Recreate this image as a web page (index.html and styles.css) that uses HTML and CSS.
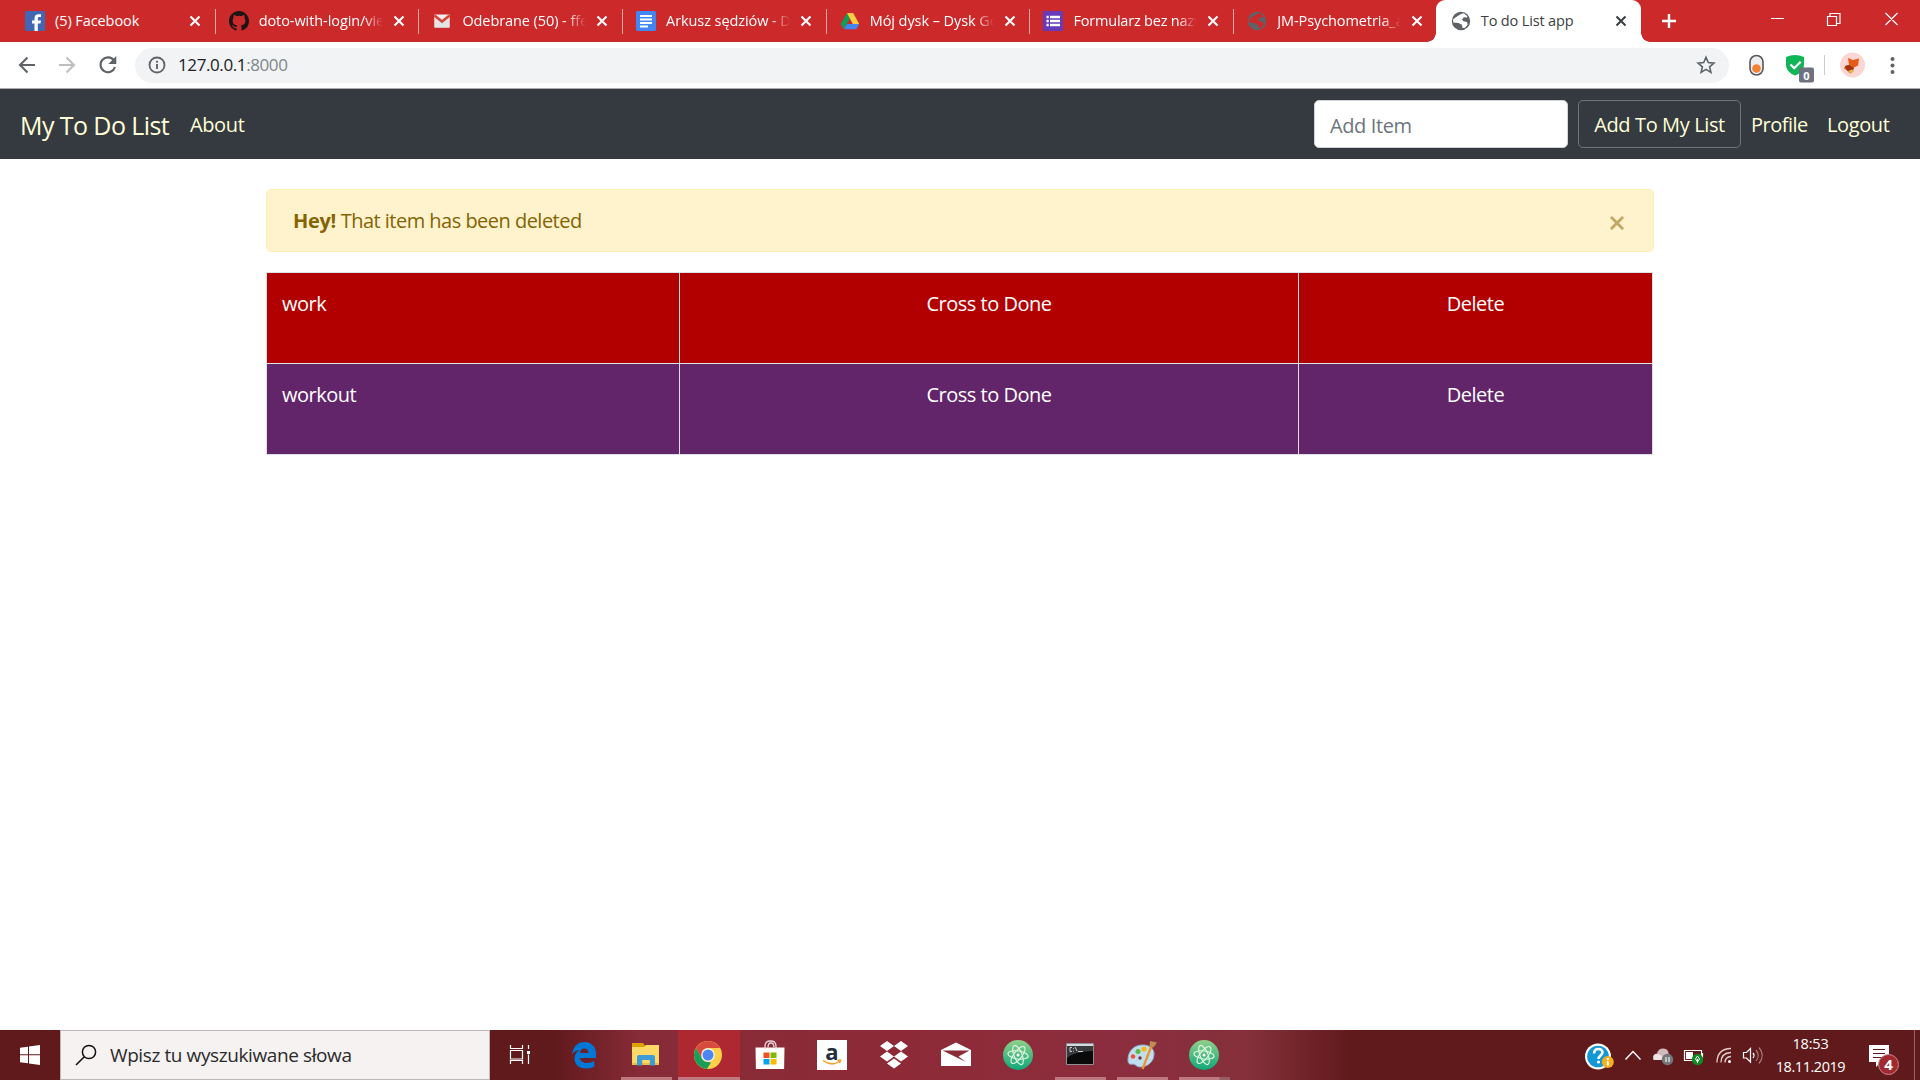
FILE: index.html
```html
<!DOCTYPE html>
<html lang="pl">
<head>
<meta charset="utf-8">
<title>To do List app</title>
<link rel="stylesheet" href="styles.css">
</head>
<body>
<svg class="defs" width="0" height="0">
  <defs>
    <symbol id="x" viewBox="0 0 12 12"><path d="M1.5 1.5l9 9m0-9l-9 9" stroke="currentColor" stroke-width="2.1" fill="none"/></symbol>
    <symbol id="globe" viewBox="0 0 20 20"><circle cx="10" cy="10" r="9.2" fill="#5f6368"/><path d="M9.5 3.2l3.2-.9 3.8 3-.7 1.3-3-.3-1.8 2.2 1.4 1.7 3.6.9.7 2.4-2.5 3.3-2.6.2-.7-3.2-3.4-1.8-5.2-.6-.2-3.2 3.1-2.3z" fill="var(--land)"/></symbol>
    <linearGradient id="ag" x2="0" y2="1"><stop stop-color="#8fd08a"/><stop offset="1" stop-color="#10a878"/></linearGradient>
    <symbol id="atom" viewBox="0 0 30 30"><circle cx="15" cy="15" r="15" fill="url(#ag)"/><g fill="none" stroke="#e4f6e4" stroke-width="1.1"><ellipse cx="15" cy="15" rx="10.2" ry="4" transform="rotate(8 15 15)"/><ellipse cx="15" cy="15" rx="10.2" ry="4" transform="rotate(68 15 15)"/><ellipse cx="15" cy="15" rx="10.2" ry="4" transform="rotate(128 15 15)"/></g><circle cx="15" cy="15" r="1.5" fill="#fff"/></symbol>
  </defs>
</svg>
<div class="screen">
  <header class="tabs">
    <div class="tab"><svg class="fav" viewBox="0 0 20 20"><rect width="20" height="20" rx="1" fill="#4267b2"/><path d="M9.5 20v-7.500H7V9.500h2.500V7.200C9.500 4.500 11 3.200 13.500 3.200l2.500.1V6h-1.600c-1.200 0-1.600.6-1.600 1.600v1.900H16l-.5 3h-2.700V20z" fill="#fff"/></svg><span class="title">(5) Facebook</span><svg class="x"><use href="#x"/></svg></div>
    <div class="tab"><svg class="fav" viewBox="0 0 16 16"><path fill="#1b1516" d="M8 0C3.580 0 0 3.580 0 8c0 3.540 2.290 6.530 5.470 7.590.4.070.55-.17.55-.38 0-.19-.01-.82-.01-1.490-2.010.37-2.530-.49-2.690-.94-.09-.23-.48-.94-.82-1.130-.28-.15-.68-.52-.01-.53.63-.01 1.080.58 1.230.82.72 1.210 1.870.87 2.330.66.070-.52.28-.87.51-1.070-1.780-.2-3.640-.89-3.640-3.950 0-.87.31-1.590.82-2.150-.08-.2-.36-1.020.08-2.120 0 0 .67-.21 2.200.82a7.600 7.600 0 0 1 4 0c1.530-1.040 2.200-.82 2.200-.82.44 1.100.16 1.920.08 2.120.51.56.82 1.270.82 2.150 0 3.070-1.870 3.750-3.650 3.950.29.25.54.73.54 1.480 0 1.070-.01 1.930-.01 2.200 0 .21.15.46.55.38A8.010 8.010 0 0 0 16 8c0-4.420-3.580-8-8-8z"/></svg><span class="title fade">doto-with-login/vie</span><svg class="x"><use href="#x"/></svg></div>
    <div class="tab"><svg class="fav" viewBox="0 0 20 20"><path d="M2.500 3.500h15v13h-15z" fill="#eee"/><path d="M2.500 16.500V5l7.500 6 7.500-6v11.500" fill="#e4e4e4"/><path d="M2.500 4.500L10 10.500l7.500-6" fill="none" stroke="#d5433b" stroke-width="2.600"/></svg><span class="title fade">Odebrane (50) - ffe</span><svg class="x"><use href="#x"/></svg></div>
    <div class="tab"><svg class="fav" viewBox="0 0 20 20"><rect width="20" height="20" rx="1.500" fill="#4285f4"/><path d="M4 5h12M4 8.500h12M4 12h12M4 15.500h8" stroke="#fff" stroke-width="2"/></svg><span class="title fade">Arkusz sędziów - D</span><svg class="x"><use href="#x"/></svg></div>
    <div class="tab"><svg class="fav" viewBox="0 0 20 20"><path d="M7 2L.700 13l3.200 5.200L10 7.300z" fill="#0f9d58"/><path d="M7 2h6.200l6 11H12.800z" fill="#ffcd40"/><path d="M3.900 18.200L7 13h12.200l-3 5.200z" fill="#4285f4"/></svg><span class="title fade">Mój dysk – Dysk Go</span><svg class="x"><use href="#x"/></svg></div>
    <div class="tab"><svg class="fav" viewBox="0 0 20 20"><rect width="20" height="20" rx="1" fill="#673ab7"/><path d="M7 6h10M7 10h10M7 14h10M3.500 6h2.200M3.500 10h2.200M3.500 14h2.200" stroke="#fff" stroke-width="2.300"/></svg><span class="title fade narrow">Formularz bez nazw</span><svg class="x"><use href="#x"/></svg></div>
    <div class="tab last"><svg class="fav"><use href="#globe"/></svg><span class="title fade">JM-Psychometria_a</span><svg class="x"><use href="#x"/></svg></div>
    <div class="tab active"><svg class="fav"><use href="#globe"/></svg><span class="title">To do List app</span><svg class="x"><use href="#x"/></svg></div>
    <svg class="plus" viewBox="0 0 16 16"><path d="M8 1v14M1 8h14" stroke="#fff" stroke-width="2.400"/></svg>
    <svg class="winbtns" viewBox="0 0 130 16"><path d="M0 7.500h13M56.500 5.500h9v9h-9zM59 5V2.500h10v10h-3M114.500 2l12 12m0-12l-12 12" fill="none" stroke="#fff" stroke-width="1.200"/></svg>
  </header>
  <div class="toolbar">
    <svg class="nav" viewBox="0 0 110 24"><g fill="none" stroke-width="2.100"><path d="M18 12H3m7.500-7.500L3 12l7.500 7.500" stroke="#5f6368"/><path d="M42 12h15m-7.500-7.500L57 12l-7.500 7.500" stroke="#bdbfc1"/><path d="M97 7.500A7.400 7.400 0 1 0 98 14" stroke="#5f6368"/></g><path d="M99.300 3v8h-8z" fill="#5f6368"/></svg>
    <div class="omni">
      <svg class="info" viewBox="0 0 18 18"><circle cx="9" cy="9" r="7.500" fill="none" stroke="#5f6368" stroke-width="1.800"/><path d="M9 8v5M9 4.700v2" stroke="#5f6368" stroke-width="1.900"/></svg>
      <span class="url">127.0.0.1<i>:8000</i></span>
      <svg class="star" viewBox="0 0 20 20"><path d="M10 2.300l2.300 5.300 5.600.5-4.300 3.700 1.300 5.600-4.900-3-4.900 3 1.300-5.600L2.100 8.100l5.600-.5z" fill="none" stroke="#5f6368" stroke-width="1.600"/></svg>
    </div>
    <svg class="ext" viewBox="0 0 164 34">
      <rect x="3" y="6.500" width="13" height="19.500" rx="6.500" fill="#ededed" stroke="#55565c" stroke-width="1.600"/><circle cx="9.500" cy="19.500" r="4.300" fill="#f58233"/>
      <path d="M39 8q9-4 18 0v8q0 7-9 10.500Q39 23 39 16z" fill="#10b656"/><path d="M43.500 15.500l3.700 3.700 6.500-6.500" fill="none" stroke="#fff" stroke-width="2.300"/>
      <rect x="52" y="18.500" width="15" height="15" rx="2" fill="#6e717e"/><text x="59.500" y="30.500" text-anchor="middle" class="badge">0</text>
      <path d="M77.500 6v20" stroke="#ccc"/>
      <circle cx="105.500" cy="16" r="12.500" fill="#fad6d4"/><path d="M101 9l5 2 6-1.500-1 7-4 2-1 4-3 2-4-4-2-.5 1-3 4-1z" fill="#e65b19"/><path d="M98 17l4-1 5 3-3 4-4-1.500z" fill="#9d3412"/><path d="M101 22l4-1.500 2 2-3 2z" fill="#e5b750"/>
      <g fill="#5f6368"><circle cx="145.500" cy="10" r="2"/><circle cx="145.500" cy="16.500" r="2"/><circle cx="145.500" cy="23" r="2"/></g>
    </svg>
  </div>
  <nav class="navbar">
    <a class="brand">My To Do List</a><a class="about">About</a>
    <div class="item-input">Add Item</div><button class="add">Add To My List</button>
    <a class="profile">Profile</a><a class="logout">Logout</a>
  </nav>
  <main>
    <div class="alert"><p><b>Hey!</b> <span>That item has been deleted</span></p><svg class="dismiss" viewBox="0 0 14 14"><path d="M1.800 1.800l10.400 10.400m0-10.400L1.800 12.200" stroke="#c2a866" stroke-width="2.900" stroke-linecap="round"/></svg></div>
    <table>
      <colgroup><col class="c1"><col class="c2"><col class="c3"></colgroup>
      <tr class="todo"><td>work</td><td>Cross to Done</td><td>Delete</td></tr>
      <tr class="done"><td>workout</td><td>Cross to Done</td><td>Delete</td></tr>
    </table>
  </main>
  <footer class="taskbar">
    <div class="start"><svg width="20" height="20" viewBox="0 0 20 20"><path d="M0 2.800L8 1.700v7.600H0zM9 1.500L20 0v9.300H9zM0 10.300h8v7.900l-8-1zM9 10.300h11V20L9 18.500z" fill="#fff"/></svg></div>
    <div class="search"><svg width="22" height="22" viewBox="0 0 22 22"><circle cx="14" cy="8" r="6.600" fill="none" stroke="#111" stroke-width="1.500"/><path d="M9.300 12.700L1 21" stroke="#111" stroke-width="1.600"/></svg><span>Wpisz tu wyszukiwane słowa</span></div>
    <div class="apps">
      <div class="app"><svg viewBox="0 0 30 30"><path d="M3.500 5v3.500h12V5M3.500 24v-3.500h12V24M3.500 10.500h12v8.500h-12zM21.500 5v4M21.500 14.500V24" fill="none" stroke="#fff" stroke-width="1.200"/><rect x="20" y="11" width="3" height="3" fill="#fff"/></svg></div>
      <div class="app"><svg viewBox="0 0 30 30"><path d="M3 14.500C4 6.500 9 2 15.500 2 22.500 2 27 7 27 13.500V18H11c.3 3.500 3.500 5 7 5 2.600 0 5-.7 7.300-2v5.500C23 28 20 28.500 17 28.500 10 28.500 5.500 24.500 5.500 18.500c0-4 2-7 5.500-8.500-4 .3-6.500 2-8 4.500zM11 13h8.500c0-3-1.500-4.500-4-4.500S11.400 10.300 11 13z" fill="#0078d7"/></svg></div>
      <div class="app run"><svg viewBox="0 0 30 30"><path d="M1 3h11l2 2.500V8H1z" fill="#dfa007"/><path d="M1 7h12l2-2h13v19.500H1z" fill="#ffd965"/><path d="M1 23h27v2H1z" fill="#efbd42"/><path d="M6 25.500V17q0-2 2-2h14q2 0 2 2v8.500h-5.200V20h-7.600v5.500z" fill="#3d9bd8"/></svg></div>
      <div class="app run on"><svg viewBox="0 0 30 30"><circle cx="15" cy="15" r="14" fill="#ffd04a"/><path d="M2.900 8A14 14 0 0 1 27.100 8H15a7 7 0 0 0-6.100 3.500L8.900 18.500z" fill="#d74c3e"/><path d="M2.900 8l6 10.500A7 7 0 0 0 15 22l3 .5-4 6.500A14 14 0 0 1 2.900 8z" fill="#199e5a"/><circle cx="15" cy="15" r="6.800" fill="#f4f4f4"/><circle cx="15" cy="15" r="5.500" fill="#4b87ef"/></svg></div>
      <div class="app"><svg viewBox="0 0 30 30"><path d="M.500 7.500h29l-.4 21.500H.900z" fill="#fff"/><path d="M10 9V6q0-5 5.500-5t5.500 5v3M13 7.500q0-4.500 3-4.500t3 4.500" fill="none" stroke="#e9d5d8" stroke-width="1.300"/><path d="M8.500 12.500h6v5.500h-6z" fill="#f25022"/><path d="M15.500 12.500h6v5.500h-6z" fill="#7fba00"/><path d="M8.500 19h6v5.500h-6z" fill="#00a4ef"/><path d="M15.500 19h6v5.500h-6z" fill="#ffb900"/></svg></div>
      <div class="app"><svg viewBox="0 0 30 30"><path d="M0 0h30v30H0z" fill="#fff"/><text x="15" y="19.500" text-anchor="middle" class="amazon">a</text><path d="M6 20.500q9 6.500 17 .5m-2.500-.8l3-.2-.8 3" fill="none" stroke="#f7a12d" stroke-width="1.500"/></svg></div>
      <div class="app"><svg viewBox="0 0 30 30"><path d="M8 1l7 5-7 5-7-5zM22 1l7 5-7 5-7-5zM8 11.500l7 5-7 5-7-5zM22 11.500l7 5-7 5-7-5zM15 18.500l7 5-7 5-7-5z" fill="#fff"/></svg></div>
      <div class="app"><svg viewBox="0 0 30 30"><path d="M0 10L15 2.500 30 10v16H0z" fill="#fff"/><path d="M1.500 10.500h27L17.500 16.500l7.500 5.500z" fill="#8c2b38"/></svg></div>
      <div class="app"><svg><use href="#atom"/></svg></div>
      <div class="app run"><svg viewBox="0 0 30 30"><path d="M1.500 3.500h27v21h-27z" fill="#0a0a0a" stroke="#8d9093"/><path d="M2 4h26v2H2z" fill="#d4dadd"/><path d="M2 6h26v5Q8 12 2 18z" fill="#393a3b"/><path d="M5 7.500v4m0-4h2m-2 4h2M8.500 8v.8m0 2v.7M10 7l2 4m1 .5h5" fill="none" stroke="#ddd" stroke-width=".9"/></svg></div>
      <div class="app run"><svg viewBox="0 0 30 30"><path d="M1 20C1 11 7 5 16 5c7 0 11 4 11 9 0 8-7 13-14 13-4 0-4-3-7-3-4 1-5-1-5-4z" fill="#c1def0" stroke="#8eb6d0"/><circle cx="6" cy="16.500" r="2.300" fill="#e5533d"/><circle cx="11" cy="11.500" r="2.500" fill="#59b943"/><circle cx="17" cy="9" r="2.600" fill="#fdb713"/><circle cx="13" cy="18" r="1.700" fill="#7e3040"/><path d="M24.500 6L15.500 29" stroke="#ee922b" stroke-width="2.300"/><path d="M23 1l7 1.500-3.500 5-4-.5z" fill="#bf8c51"/></svg></div>
      <div class="app run multi"><svg><use href="#atom"/></svg></div>
    </div>
    <div class="tray">
      <svg class="trayicons" viewBox="0 0 186 50">
        <circle cx="13" cy="26.500" r="13" fill="#fff"/><circle cx="13" cy="26.500" r="10.800" fill="#1497d5"/><path d="M9 23.500q.3-4.500 4.300-4.500t4.200 3.500c0 2.500-4 3-4 6.500" fill="none" stroke="#fff" stroke-width="2.600"/><circle cx="13.500" cy="32" r="1.600" fill="#fff"/><circle cx="22.800" cy="32" r="6" fill="#f6b01f"/><path d="M22.800 31v4.500M22.800 28v2" stroke="#fff" stroke-width="1.800"/>
        <path d="M40.500 29.500l7.500-8 7.500 8" fill="none" stroke="#fff" stroke-width="1.400"/>
        <path d="M69 30q-2.500-6 3-6.500 1-5 6.500-5 5 .5 5 5 3 1 2 6.500z" fill="#d0babb"/><path d="M68.500 30q-1.500-6 4-6 4 0 7 6z" fill="#eee4e4"/><circle cx="82.500" cy="29.500" r="5.700" fill="#75777a"/><path d="M81 27v5m3-5v5" stroke="#fff" stroke-width="1.100"/>
        <path d="M99.500 20.500h17v10h-17zM117.500 23v5" fill="none" stroke="#fff" stroke-width="1.200"/><path d="M101 22h7v7h-7z" fill="#fff"/><circle cx="112.500" cy="29.500" r="5.700" fill="#0e8a26"/><path d="M112.500 26l2 3-2 3-2-3zM112.500 29v4" fill="none" stroke="#fff"/>
        <g fill="none" stroke="#e2d0d0" stroke-width="1.300"><path d="M132 32.500Q132 19 146 18.500M136 32.500Q136 23 146 22.500M140 32.500Q140 27 146 26.500"/></g><circle cx="144.500" cy="31.500" r="1.500" fill="#fff"/>
        <path d="M158.500 22.500h3l4-4v13.500l-4-4h-3z" fill="none" stroke="#fff" stroke-width="1.200"/><path d="M168 23q2 2.300 0 5" fill="none" stroke="#fff" stroke-width="1.200"/><path d="M171 20q4.500 5.300 0 11M174 17.500q6.500 8 0 16" fill="none" stroke="#a67d7d" stroke-width="1.200"/>
      </svg>
      <div class="clock"><span>18:53</span><span class="date">18.11.2019</span></div>
      <svg class="notice" viewBox="0 0 34 50"><path d="M0 15h20v17h-8l-5 5v-5H0z" fill="#fff"/><path d="M4 19.500h12M4 23.500h12M4 27.500h9" stroke="#5f191c" stroke-width="1.200"/><circle cx="19.500" cy="34.500" r="10" fill="#a32930" stroke="#c98a8d"/><text x="19.500" y="40" text-anchor="middle" class="count">4</text></svg>
      <div class="peek"></div>
    </div>
  </footer>
</div>
</body>
</html>
```
FILE: styles.css
```css
* { box-sizing: border-box; }
body { margin: 0; font-family: "Open Sans", "Noto Sans", sans-serif; background: #fff; }
.defs { display: block; height: 0; }
.screen { width: 1920px; height: 1080px; display: flex; flex-direction: column; overflow: hidden; }
svg { flex: none; display: block; }

.tabs { height: 42px; background: #cc292b; display: flex; align-items: center; color: #fff; padding-left: 12px; --land: #cc292b; }
.tab { width: 203.700px; height: 42px; display: flex; align-items: center; padding: 0 14px 0 13px; position: relative; flex: none; }
.tab:not(.active):not(.last)::after { content: ""; position: absolute; right: 0; top: 9px; width: 1px; height: 25px; background: #eba5a6; }
.fav { width: 20px; height: 20px; }
.title { width: 124px; margin: 0 10px; font-size: 14.500px; letter-spacing: -.08px; line-height: 20px; white-space: nowrap; flex: none; }
.fade { -webkit-mask-image: linear-gradient(90deg, #000 105px, transparent 124px); mask-image: linear-gradient(90deg, #000 105px, transparent 124px); }
.narrow { letter-spacing: -.2px; }
.x { width: 12px; height: 12px; }
.active { width: 205px; margin-left: -2px; background: #fff; color: #3c4043; border-radius: 9px 9px 0 0; padding-left: 15px; --land: #fff; }
.active .title { letter-spacing: -.15px; }
.active::before, .active::after { content: ""; position: absolute; bottom: 0; width: 9px; height: 9px; }
.active::before { left: -9px; background: radial-gradient(circle at 0 0, #cc292b 8.500px, #fff 9px); }
.active::after { right: -9px; background: radial-gradient(circle at 100% 0, #cc292b 8.500px, #fff 9px); }
.plus { width: 16px; height: 16px; margin-left: 20px; }
.winbtns { width: 130px; height: 16px; margin: 0 19px 5px auto; }

.toolbar { height: 47px; display: flex; align-items: center; border-bottom: 1px solid #aeabae; padding-left: 17px; flex: none; }
.nav { width: 110px; height: 24px; }
.omni { margin-left: 8px; width: 1594px; height: 35px; background: #f1f3f4; border-radius: 18px; display: flex; align-items: center; padding: 0 13px 0 13px; }
.info { width: 18px; height: 18px; }
.url { margin-left: 12px; font-size: 17px; line-height: 24px; color: #202124; letter-spacing: -.4px; }
.url i { font-style: normal; color: #80868b; }
.star { width: 20px; height: 20px; margin-left: auto; }
.ext { width: 164px; height: 34px; margin: 2px 0 0 18px; }
.badge { font: bold 11px "Open Sans", sans-serif; fill: #fff; }

.navbar { height: 70px; background: #343a40; display: flex; align-items: center; padding: 0 28px 0 20px; color: #ffffd6; font-size: 20px; letter-spacing: -.38px; line-height: 30px; white-space: nowrap; flex: none; }
.navbar a { padding-top: 2px; }
.brand { font-size: 25px; width: 170px; letter-spacing: -.58px; }
.item-input { margin-left: auto; width: 254px; height: 48px; border: 1px solid #ced4da; border-radius: 5px; background: #fff; color: #6c757d; padding: 10px 15px 6px; }
.add { margin: 0 10px; width: 163px; height: 48px; border: 1px solid #6c757d; border-radius: 5px; background: none; color: inherit; font: inherit; letter-spacing: inherit; padding: 2px 0 0; }
.profile { width: 76px; letter-spacing: -.5px; }
.logout { width: 65px; }

main { flex: 1; padding: 30px 0 0 266px; }
.alert { width: 1388px; height: 63px; border: 1px solid #ffeeba; border-radius: 5px; background: #fff3cd; color: #856404; display: flex; align-items: center; justify-content: space-between; padding: 0 29px 0 26px; font-size: 20px; letter-spacing: -.52px; margin-bottom: 20px; }
.alert p { margin: 0; }
.alert b { letter-spacing: -.3px; }
.dismiss { width: 14px; height: 14px; margin-top: 5px; }
table { border-collapse: collapse; table-layout: fixed; width: 1387px; color: #fff; font-size: 20px; letter-spacing: -.5px; line-height: 30px; }
.c1 { width: 413px; }
.c2 { width: 619px; }
.c3 { width: 354px; }
td { border: 1px solid #dee2e6; height: 91px; vertical-align: top; padding: 16px 15px 14px; text-align: center; }
td:first-child { text-align: left; }
.todo { background: #b20000; }
.done { background: #622569; }

.taskbar { height: 50px; flex: none; display: flex; background: linear-gradient(90deg, #611a1c 0, #611a1c 555px, #872b38 640px, #8e2a37 900px, #8b2d3e 1120px, #84303b 1250px, #611a1c 1350px); }
.start { width: 60px; padding-right: 1px; display: flex; align-items: center; justify-content: center; }
.search { width: 430px; background: #f5f2f1; border: 1px solid #bdb9b9; display: flex; align-items: center; padding-left: 14px; gap: 13px; font-size: 19px; letter-spacing: -.4px; color: #2b2b2b; white-space: nowrap; }
.apps { display: flex; padding-left: 2px; }
.app { width: 62px; height: 50px; display: flex; align-items: center; justify-content: center; padding-right: 2px; position: relative; }
.app svg { width: 30px; height: 30px; }
.run::after { content: ""; position: absolute; bottom: 0; left: 5px; width: 51px; height: 3px; background: #bd797f; }
.on { background: #ad2830; }
.on::after { left: 0; width: 62px; }
.multi::after { width: 51px; background: linear-gradient(90deg, #bd797f 40px, #935e64 41px); }
.amazon { font: bold 22px "Open Sans", sans-serif; fill: #232f3e; }
.tray { margin-left: auto; display: flex; color: #fff; }
.trayicons { width: 186px; height: 50px; }
.clock { width: 84px; padding-right: 5px; display: flex; flex-direction: column; align-items: center; font-size: 14.500px; letter-spacing: -.2px; line-height: 23px; padding-top: 2px; white-space: nowrap; }
.date { letter-spacing: -.45px; }
.notice { width: 34px; height: 50px; margin-left: 14px; }
.count { font: bold 15px "Open Sans", sans-serif; fill: #fff; }
.peek { width: 6px; margin-left: 11px; border-left: 1px solid #926566; }
```
